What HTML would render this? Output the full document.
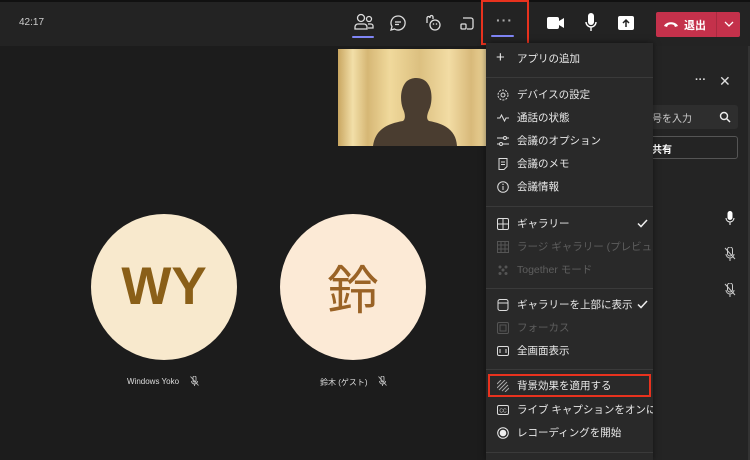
<!DOCTYPE html>
<html><head><meta charset="utf-8"><style>
*{margin:0;padding:0;box-sizing:border-box}
body{width:750px;height:460px;overflow:hidden;background:#1c1c1c;font-family:"Liberation Sans","Noto Sans CJK JP",sans-serif;position:relative;color:#fff}
.abs{position:absolute}
.top{left:0;top:0;width:750px;height:46px;background:#232323;border-top:2px solid #111}
.menu{left:486px;top:43px;width:167px;height:417px;background:#292929;box-shadow:0 0 6px rgba(0,0,0,.5)}
.it{position:absolute;left:0;width:167px;height:22px;font-size:10.5px;color:#e8e8e8;line-height:22px;padding-left:31px;white-space:nowrap;overflow:hidden}
.it.dis{color:#5e5e5e}
.ic{position:absolute;left:11px;top:5px;width:12px;height:12px}
.sep{position:absolute;left:0;width:167px;height:1px;background:#3a3a3a}
.chk{position:absolute;right:5px;top:6px;width:11px;height:9px}
.red{border:2px solid #e8321e}
</style></head><body>
<div class="abs top"></div>
<div class="abs" style="left:19px;top:17px;font-size:10px;color:#ccc">42:17</div>
<svg class="abs" style="left:350px;top:12px" width="30" height="26" viewBox="0 0 30 26">
<circle cx="11" cy="6" r="3.5" fill="none" stroke="#ddd" stroke-width="1.3"/><circle cx="19" cy="7" r="2.5" fill="none" stroke="#ddd" stroke-width="1.3"/>
<path d="M5 17v-2a3 3 0 0 1 3-3h6a3 3 0 0 1 3 3v2z M18 12h3a2 2 0 0 1 2 2v2h-5" fill="none" stroke="#ddd" stroke-width="1.3"/>
<rect x="2" y="24" width="22" height="2" rx="1" fill="#7f85f5"/></svg>
<svg class="abs" style="left:389px;top:14px" width="18" height="18" viewBox="0 0 18 18"><path d="M9 2a7 7 0 1 1-3.5 13L2 16l1-3.4A7 7 0 0 1 9 2z" fill="none" stroke="#ddd" stroke-width="1.3"/><path d="M6 8h6M6 10.5h4" stroke="#ddd" stroke-width="1.2"/></svg>
<svg class="abs" style="left:424px;top:14px" width="18" height="18" viewBox="0 0 18 18"><path d="M3 9V4a1.5 1.5 0 0 1 3 0v-1a1.5 1.5 0 0 1 3 0v2" fill="none" stroke="#ddd" stroke-width="1.3"/><circle cx="11" cy="11" r="5" fill="none" stroke="#ddd" stroke-width="1.3"/><circle cx="9.5" cy="10" r=".8" fill="#ddd"/><circle cx="12.5" cy="10" r=".8" fill="#ddd"/></svg>
<svg class="abs" style="left:459px;top:15px" width="16" height="16" viewBox="0 0 16 16"><path d="M4 3h8a2 2 0 0 1 2 2v7a2 2 0 0 1-2 2H8" fill="none" stroke="#ddd" stroke-width="1.3"/><rect x="2" y="9" width="5" height="5" rx="1" fill="none" stroke="#ddd" stroke-width="1.3"/></svg>
<div class="abs red" style="left:481px;top:0;width:48px;height:45px"></div>
<div class="abs" style="left:496px;top:12px;font-size:14px;color:#aaa;letter-spacing:1px;font-weight:bold">···</div>
<div class="abs" style="left:491px;top:35px;width:23px;height:2px;background:#7f85f5;border-radius:1px"></div>
<svg class="abs" style="left:547px;top:16px" width="18" height="14" viewBox="0 0 18 14"><rect x="0" y="1" width="12" height="12" rx="2" fill="#fff"/><path d="M12 5l5-3v10l-5-3z" fill="#fff"/></svg>
<svg class="abs" style="left:585px;top:13px" width="12" height="20" viewBox="0 0 12 20"><rect x="3" y="0" width="6" height="12" rx="3" fill="#fff"/><path d="M1 9a5 5 0 0 0 10 0M6 14v4" fill="none" stroke="#fff" stroke-width="1.4"/></svg>
<svg class="abs" style="left:618px;top:16px" width="16" height="14" viewBox="0 0 16 14"><rect x="0" y="0" width="16" height="14" rx="2" fill="#fff"/><path d="M8 11V4M5 7l3-3 3 3" stroke="#222" stroke-width="1.5" fill="none"/></svg>
<div class="abs" style="left:656px;top:12px;width:84px;height:25px;background:#c4314b;border-radius:2px"></div>
<div class="abs" style="left:716px;top:12px;width:1px;height:25px;background:#a82a40"></div>
<svg class="abs" style="left:663px;top:20px" width="16" height="8" viewBox="0 0 16 8"><path d="M1 6C3 1 13 1 15 6l-3 1-1-2c-2-1-4-1-6 0l-1 2z" fill="#fff"/></svg>
<div class="abs" style="left:684px;top:17px;font-size:11px;font-weight:bold">退出</div>
<svg class="abs" style="left:724px;top:21px" width="10" height="6" viewBox="0 0 10 6"><path d="M1 1l4 4 4-4" stroke="#fff" fill="none" stroke-width="1.3"/></svg>
<svg class="abs" style="left:338px;top:49px" width="148" height="97" viewBox="0 0 148 97">
<defs><linearGradient id="g" x1="0" x2="1"><stop offset="0" stop-color="#c9a661"/><stop offset=".1" stop-color="#f2dfa8"/><stop offset=".2" stop-color="#d6b775"/><stop offset=".35" stop-color="#f0d99c"/><stop offset=".55" stop-color="#dcc080"/><stop offset=".75" stop-color="#f2dca4"/><stop offset=".9" stop-color="#d8b97a"/><stop offset="1" stop-color="#ecd498"/></linearGradient></defs>
<rect width="148" height="97" fill="url(#g)"/>
<path d="M35 97c2-15 12-22 30-25 3-2 2-8 0-12-3-8-3-20 3-27 6-6 18-5 22 2 5 7 4 20 1 26-2 5-3 9 0 11 17 3 27 10 28 25z" fill="#4a3d30"/></svg>
<div class="abs" style="left:91px;top:214px;width:146px;height:146px;border-radius:50%;background:#f8e9cd"></div>
<div class="abs" style="left:91px;top:254px;width:146px;text-align:center;font-size:53px;font-weight:bold;color:#8a5f18;line-height:66px">WY</div>
<div class="abs" style="left:280px;top:214px;width:146px;height:146px;border-radius:50%;background:#fcead6"></div>
<div class="abs" style="left:280px;top:254px;width:146px;text-align:center;font-size:52px;color:#9a6326;line-height:66px;font-family:'Noto Sans CJK JP',sans-serif">鈴</div>
<div class="abs" style="left:127px;top:377px;font-size:8px;color:#ddd">Windows Yoko</div>
<svg class="abs" style="left:190px;top:376px" width="9" height="10" viewBox="0 0 9 10"><rect x="3" y="0" width="3" height="6" rx="1.5" fill="none" stroke="#bbb" stroke-width=".9"/><path d="M1.5 5a3 3 0 0 0 6 0M4.5 8v2M.5 .5l8 9" stroke="#bbb" fill="none" stroke-width=".9"/></svg>
<div class="abs" style="left:320px;top:377px;font-size:8px;color:#ddd">鈴木 (ゲスト)</div>
<svg class="abs" style="left:378px;top:376px" width="9" height="10" viewBox="0 0 9 10"><rect x="3" y="0" width="3" height="6" rx="1.5" fill="none" stroke="#bbb" stroke-width=".9"/><path d="M1.5 5a3 3 0 0 0 6 0M4.5 8v2M.5 .5l8 9" stroke="#bbb" fill="none" stroke-width=".9"/></svg>
<div class="abs" style="left:653px;top:46px;width:97px;height:414px;background:#242424;border-right:2px solid #333"></div>
<div class="abs" style="left:695px;top:74px;font-size:11px;color:#ddd;font-weight:bold">···</div>
<div class="abs" style="left:719px;top:73px;font-size:14px;color:#ddd">✕</div>
<div class="abs" style="left:640px;top:105px;width:98px;height:24px;background:#2e2e2e;border-radius:3px"></div>
<div class="abs" style="left:652px;top:110px;font-size:10px;color:#ccc">号を入力</div>
<svg class="abs" style="left:719px;top:111px" width="12" height="12" viewBox="0 0 12 12"><circle cx="5" cy="5" r="3.5" fill="none" stroke="#eee" stroke-width="1.4"/><path d="M7.5 7.5L11 11" stroke="#eee" stroke-width="1.5"/></svg>
<div class="abs" style="left:640px;top:136px;width:98px;height:23px;border:1px solid #555;border-radius:3px"></div>
<div class="abs" style="left:652px;top:141px;font-size:10px;font-weight:bold;color:#fff">共有</div>
<svg class="abs" style="left:725px;top:211px" width="10" height="14" viewBox="0 0 10 14"><rect x="2.5" y="0" width="5" height="9" rx="2.5" fill="#fff"/><path d="M1 7a4 4 0 0 0 8 0M5 11v3" stroke="#fff" fill="none"/></svg>
<svg class="abs" style="left:724px;top:247px" width="12" height="14" viewBox="0 0 12 14"><rect x="3.5" y="0" width="5" height="9" rx="2.5" fill="none" stroke="#ccc"/><path d="M2 7a4 4 0 0 0 8 0M6 11v3M1 1l10 11" stroke="#ccc" fill="none"/></svg>
<svg class="abs" style="left:724px;top:283px" width="12" height="14" viewBox="0 0 12 14"><rect x="3.5" y="0" width="5" height="9" rx="2.5" fill="none" stroke="#ccc"/><path d="M2 7a4 4 0 0 0 8 0M6 11v3M1 1l10 11" stroke="#ccc" fill="none"/></svg>
<div class="abs menu">
<div class="it" style="top:5px"><span class="ic" style="top:0;font-size:15px;line-height:20px;left:10px">+</span>アプリの追加</div>
<div class="sep" style="top:34px"></div>
<div class="it" style="top:41px"><svg class="ic" viewBox="0 0 12 12"><circle cx="6" cy="6" r="2" fill="none" stroke="#ddd"/><circle cx="6" cy="6" r="5" fill="none" stroke="#ddd" stroke-dasharray="2 1.2"/></svg>デバイスの設定</div>
<div class="it" style="top:64px"><svg class="ic" viewBox="0 0 12 12"><path d="M0 6h3l1.5-3 3 6 1.5-3h3" fill="none" stroke="#ddd"/></svg>通話の状態</div>
<div class="it" style="top:87px"><svg class="ic" viewBox="0 0 12 12"><path d="M0 3h12M0 9h12" stroke="#ddd"/><circle cx="8" cy="3" r="1.5" fill="#292929" stroke="#ddd"/><circle cx="4" cy="9" r="1.5" fill="#292929" stroke="#ddd"/></svg>会議のオプション</div>
<div class="it" style="top:110px"><svg class="ic" viewBox="0 0 12 12"><path d="M2 .5h8v8l-3 3H2z" fill="none" stroke="#ddd"/><path d="M4 4h4M4 6.5h4" stroke="#ddd"/></svg>会議のメモ</div>
<div class="it" style="top:133px"><svg class="ic" viewBox="0 0 12 12"><circle cx="6" cy="6" r="5.3" fill="none" stroke="#ddd"/><path d="M6 5v4" stroke="#ddd"/><circle cx="6" cy="3.3" r=".7" fill="#ddd"/></svg>会議情報</div>
<div class="sep" style="top:163px"></div>
<div class="it" style="top:170px"><svg class="ic" viewBox="0 0 12 12"><rect x=".5" y=".5" width="11" height="11" rx="1.5" fill="none" stroke="#ddd"/><path d="M6 0v12M0 6h12" stroke="#ddd"/></svg>ギャラリー<svg class="chk" viewBox="0 0 11 9"><path d="M1 4.5l3 3 6-6.5" stroke="#eee" stroke-width="1.5" fill="none"/></svg></div>
<div class="it dis" style="top:193px"><svg class="ic" viewBox="0 0 12 12"><rect x=".5" y=".5" width="11" height="11" fill="none" stroke="#555"/><path d="M4 0v12M8 0v12M0 4h12M0 8h12" stroke="#555"/></svg>ラージ ギャラリー (プレビュー)</div>
<div class="it dis" style="top:216px"><svg class="ic" viewBox="0 0 12 12"><circle cx="3" cy="3" r="1.5" fill="#555"/><circle cx="9" cy="3" r="1.5" fill="#555"/><circle cx="6" cy="6" r="1.5" fill="#555"/><circle cx="3" cy="9.5" r="1.5" fill="#555"/><circle cx="9" cy="9.5" r="1.5" fill="#555"/></svg>Together モード</div>
<div class="sep" style="top:245px"></div>
<div class="it" style="top:251px"><svg class="ic" viewBox="0 0 12 12"><rect x="1" y=".5" width="10" height="11" rx="2" fill="none" stroke="#ddd"/><path d="M1 4h10" stroke="#ddd"/></svg>ギャラリーを上部に表示<svg class="chk" viewBox="0 0 11 9"><path d="M1 4.5l3 3 6-6.5" stroke="#eee" stroke-width="1.5" fill="none"/></svg></div>
<div class="it dis" style="top:274px"><svg class="ic" viewBox="0 0 12 12"><rect x=".5" y=".5" width="11" height="11" rx="1.5" fill="none" stroke="#555"/><rect x="3" y="3" width="6" height="6" fill="none" stroke="#555"/></svg>フォーカス</div>
<div class="it" style="top:297px"><svg class="ic" viewBox="0 0 12 12"><rect x=".5" y="1.5" width="11" height="9" rx="1.5" fill="none" stroke="#ddd"/><path d="M3 4v4M9 4v4" stroke="#ddd"/></svg>全画面表示</div>
<div class="sep" style="top:326px"></div>
<div class="abs red" style="left:2px;top:331px;width:163px;height:23px"></div>
<div class="it" style="top:332px"><svg class="ic" viewBox="0 0 12 12"><path d="M0 4l4-4M0 8l8-8M2 10l8-8M5 11l6-6M8 12l4-4" stroke="#aaa"/></svg>背景効果を適用する</div>
<div class="it" style="top:356px"><svg class="ic" viewBox="0 0 12 12"><rect x=".5" y="1.5" width="11" height="9" rx="1.5" fill="none" stroke="#ddd"/><text x="6" y="8.3" font-size="5" fill="#ddd" text-anchor="middle" font-family="Liberation Sans">CC</text></svg>ライブ キャプションをオンに</div>
<div class="it" style="top:379px"><svg class="ic" viewBox="0 0 12 12"><circle cx="6" cy="6" r="5.3" fill="none" stroke="#eee"/><circle cx="6" cy="6" r="3.3" fill="#eee"/></svg>レコーディングを開始</div>
<div class="sep" style="top:409px"></div>
</div>
</body></html>
